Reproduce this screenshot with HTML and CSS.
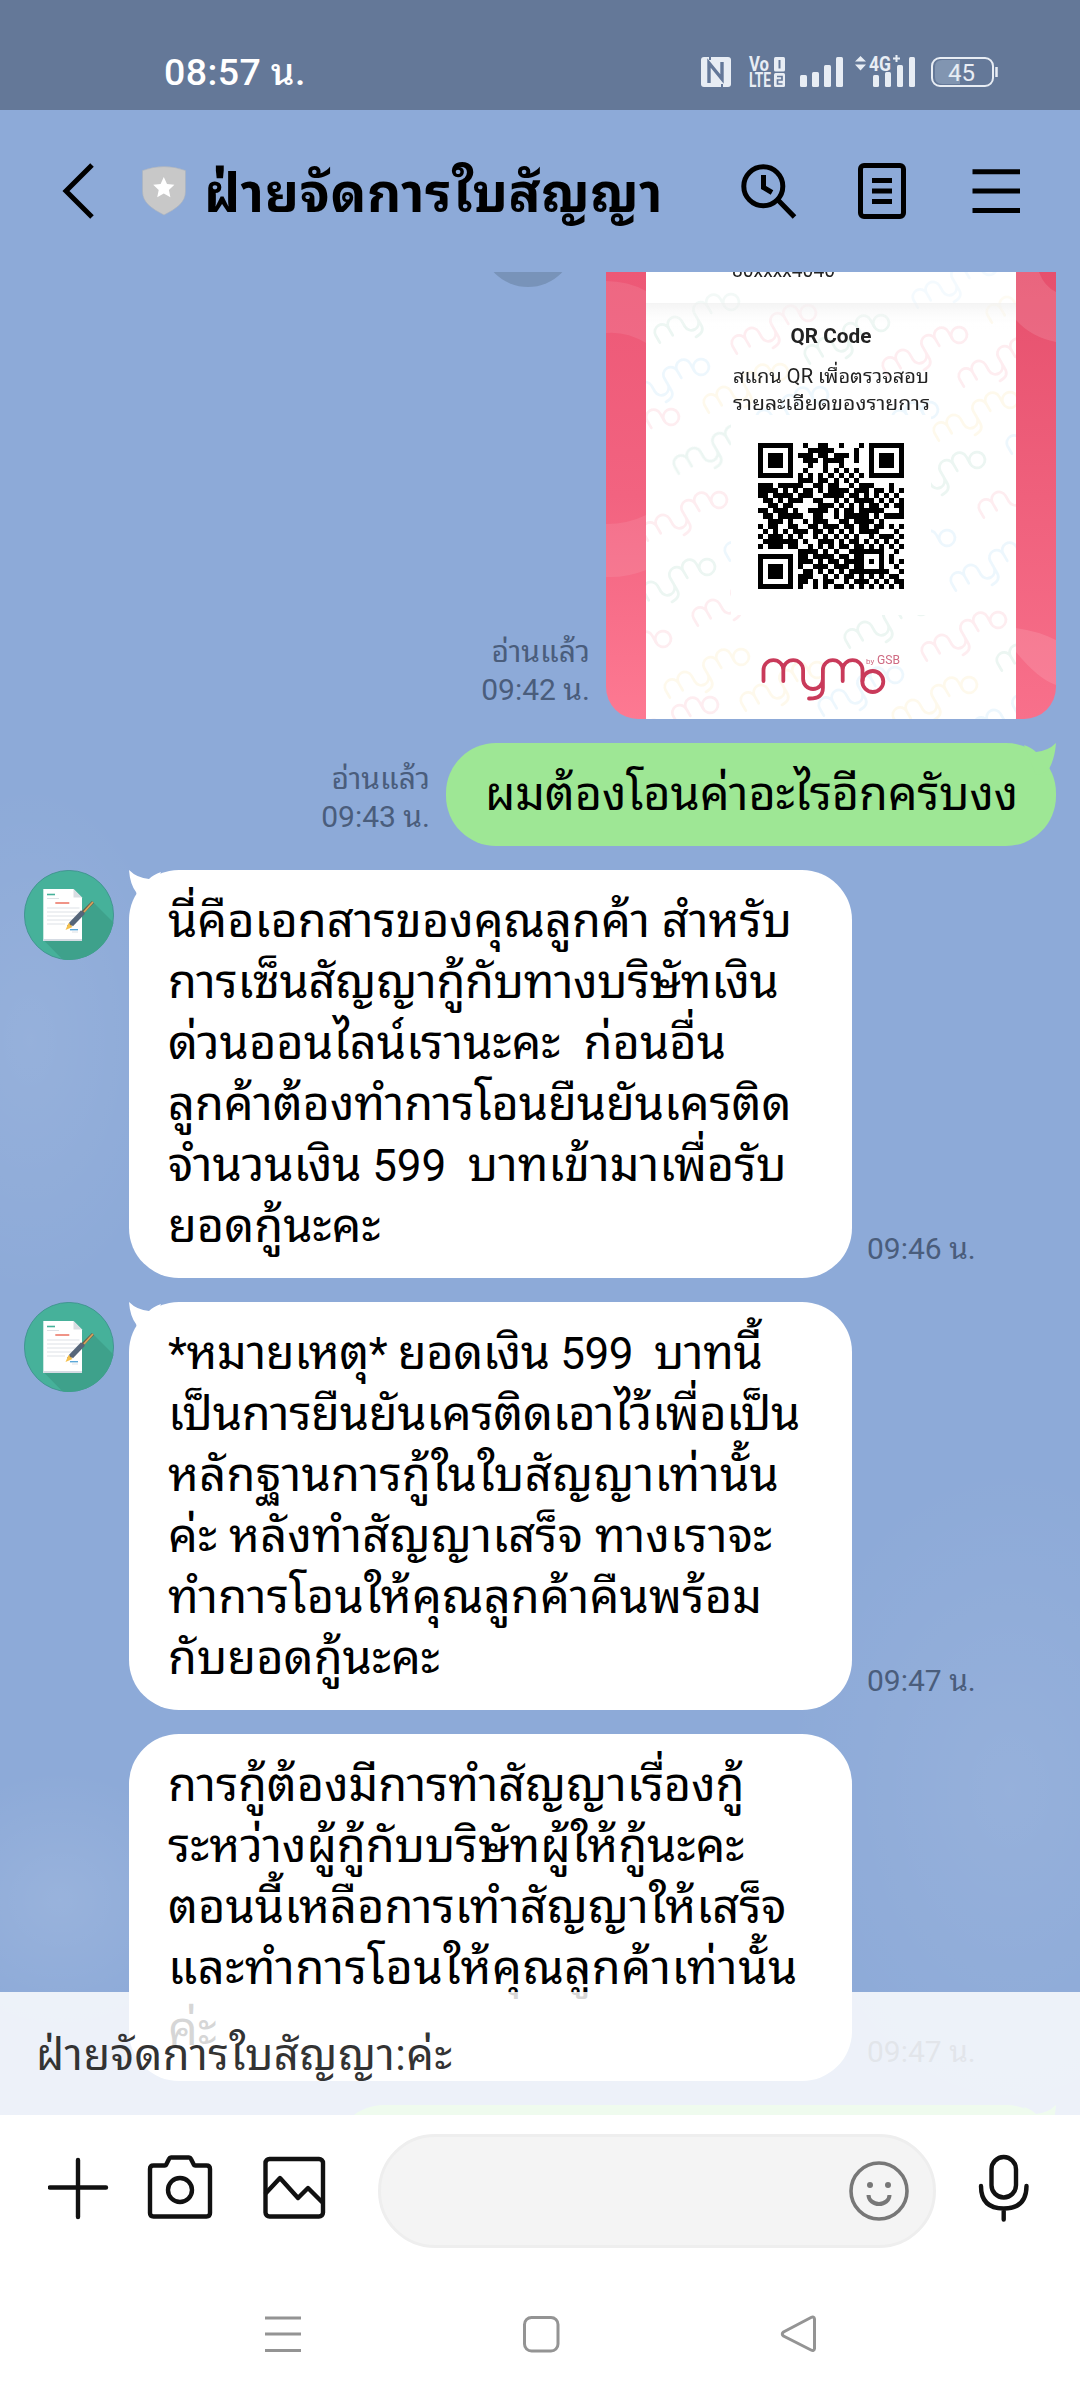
FILE: index.html
```html
<!DOCTYPE html>
<html lang="th">
<head>
<meta charset="utf-8">
<title>ฝ่ายจัดการใบสัญญา</title>
<link rel="stylesheet" href="styles.css">
</head>
<body>
<div class="phone">
  <div class="status">
    <span class="clock">08:57 น.</span>
    <svg class="status-icons" width="300" height="36" viewBox="700 54 300 36">
      <g fill="#e8edf4">
        <rect x="701" y="57" width="30" height="30" rx="3"/>
        <path d="M709 83V63L722 79V62" fill="none" stroke="#647899" stroke-width="3.4"/>
        <path d="M710 57v3M722 84v3" stroke="#647899" stroke-width="2"/>
        <text x="749" y="71" class="volte" textLength="20" lengthAdjust="spacingAndGlyphs">Vo</text>
        <text x="749" y="87" class="volte" textLength="22" lengthAdjust="spacingAndGlyphs">LTE</text>
        <rect x="774" y="57" width="11" height="14.500" rx="1.500"/>
        <rect x="774" y="73" width="11" height="14" rx="1.500"/>
        <path d="M779.500 60v8.500" stroke="#647899" stroke-width="2"/>
        <path d="M777 76.500h5v3.500h-4.500v4h5" fill="none" stroke="#647899" stroke-width="1.700"/>
        <rect x="800" y="75" width="7" height="12" rx="1.500"/><rect x="812" y="72" width="7" height="15" rx="1.500"/><rect x="824" y="65" width="7" height="22" rx="1.500"/><rect x="836" y="57" width="7" height="30" rx="1.500"/>
        <rect x="873" y="75" width="6" height="12" rx="1.500"/><rect x="885" y="72" width="6" height="15" rx="1.500"/><rect x="897" y="65" width="6" height="22" rx="1.500"/><rect x="909" y="57" width="6" height="30" rx="1.500"/>
        <path d="M855 61.500l5.500-5.500 5.500 5.500zM855 64.500h11l-5.500 6z"/>
        <text x="869" y="70.500" class="net" textLength="22" lengthAdjust="spacingAndGlyphs">4G</text>
        <path d="M893 58.500h7M896.500 55v7" stroke="#e8edf4" stroke-width="2"/>
        <path d="M942 60h18v24h-18q-7 0-7-7v-10q0-7 7-7z" fill="#8195b1"/>
        <rect x="932" y="58" width="61" height="28" rx="8" fill="none" stroke="#e8edf4" stroke-width="2"/>
        <path d="M996.500 67v10" stroke="#e8edf4" stroke-width="2.500"/>
        <text x="948" y="81" class="batt" textLength="27" lengthAdjust="spacingAndGlyphs">45</text>
      </g>
    </svg>
  </div>

  <header class="header">
    <svg class="back" width="36" height="56" viewBox="60 163 36 56"><path d="M92 165L66 191L92 217"/></svg>
    <svg class="shield" width="44" height="50" viewBox="142 167 44 50"><path d="M142.500 171.500q21.500-8 43 0v21c0 11-9 17-21.500 23.500c-12.500-6.500-21.500-12.500-21.500-23.500z" fill="#c8c8c8" stroke="#a9b1bd" stroke-width=".6"/><path d="M163.800 178l3.200 7 7.400.8-5.500 5.100 1.500 7.400-6.600-3.700-6.600 3.700 1.500-7.400-5.500-5.100 7.400-.8z" fill="#fff"/></svg>
    <h1 class="title">ฝ่ายจัดการใบสัญญา</h1>
    <svg class="tools" width="282" height="60" viewBox="740 161 282 60">
      <circle cx="763.300" cy="186.300" r="19.500"/><path d="M763.500 175V187.500L772 192.500M778 200L794.500 217"/>
      <rect x="860.500" y="165.500" width="43" height="51" rx="3.500"/><path d="M872 180.500h20M872 191h20M872 201.500h20"/>
      <path d="M972.500 171.700h47.500M972.500 191h47.500M972.500 210.600h47.500"/>
    </svg>
  </header>

  <main class="chat">
    <div class="row mine row-slip">
      <div class="share"></div>
      <div class="meta">อ่านแล้ว<br>09:42 น.</div>
      <svg class="slip" width="450" height="447" viewBox="0 0 450 447">
        <defs>
          <linearGradient id="pink" x1="0" y1="0" x2="0" y2="1"><stop offset="0" stop-color="#ed5876"/><stop offset=".5" stop-color="#f26380"/><stop offset="1" stop-color="#fd7992"/></linearGradient>
          <linearGradient id="pinkRight" x1="0" y1="0" x2="0" y2="1"><stop offset="0" stop-color="#e6506d"/><stop offset="1" stop-color="#f8708b"/></linearGradient>
          <linearGradient id="fade" x1="0" y1="0" x2="0" y2="1"><stop offset="0" stop-color="#f1f1f1"/><stop offset="1" stop-color="#fff" stop-opacity="0"/></linearGradient>
          <clipPath id="paper"><rect x="40" y="0" width="370" height="447"/></clipPath>
          <g id="mymo" fill="none" stroke-linecap="round"><path d="M0 21V10a9.900 9.900 0 0 1 19.800 0V21M19.800 10a9.900 9.900 0 0 1 19.800 0V19a9.900 10 0 0 0 19.800 0V10a9.900 9.900 0 0 1 19.800 0V21M79.200 10a9.900 9.900 0 0 1 19.800 0V21M59.400 10V28Q59.400 39 45.500 38.500"/><circle cx="109.300" cy="21.500" r="10.500"/></g>
        </defs>
        <rect width="42" height="447" fill="url(#pink)"/>
        <path d="M0 9q22 0 40 10V71Q20 59 0 61zM0 252Q22 252 40 243V298Q20 306 0 305z" fill="#fff" opacity=".09"/>
        <rect x="408" width="42" height="447" fill="url(#pinkRight)"/>
        <path d="M410 0h23q5 14 17 20v50q-25-5-40-22zM410 356q22 3 40 12v45q-18-6-40-33z" fill="#fff" opacity=".12"/>
        <g clip-path="url(#paper)">
          <rect x="40" width="370" height="447" fill="#fff"/>
          <g stroke-width="3.600" opacity=".085">
            <g stroke="#188c68"><use href="#mymo" transform="translate(46 57) rotate(-30) scale(.75)"/><use href="#mymo" transform="translate(196 78) rotate(-30) scale(.75)"/><use href="#mymo" transform="translate(65 188) rotate(-30) scale(.75)"/><use href="#mymo" transform="translate(22 322) rotate(-30) scale(.75)"/><use href="#mymo" transform="translate(292 215) rotate(-30) scale(.75)"/><use href="#mymo" transform="translate(236 362) rotate(-30) scale(.75)"/><use href="#mymo" transform="translate(388 385) rotate(-30) scale(.75)"/></g>
            <g stroke="#ea2850"><use href="#mymo" transform="translate(123 68) rotate(-30) scale(.75)"/><use href="#mymo" transform="translate(274 90) rotate(-30) scale(.75)"/><use href="#mymo" transform="translate(350 101) rotate(-30) scale(.75)"/><use href="#mymo" transform="translate(34 255) rotate(-30) scale(.75)"/><use href="#mymo" transform="translate(84 340) rotate(-30) scale(.75)"/><use href="#mymo" transform="translate(370 232) rotate(-30) scale(.75)"/><use href="#mymo" transform="translate(313 375) rotate(-30) scale(.75)"/><use href="#mymo" transform="translate(-14 172) rotate(-30) scale(.75)"/><use href="#mymo" transform="translate(-22 394) rotate(-30) scale(.75)"/><use href="#mymo" transform="translate(25 460) rotate(-30) scale(.75)"/></g>
            <g stroke="#2c9ee8"><use href="#mymo" transform="translate(16 122) rotate(-30) scale(.75)"/><use href="#mymo" transform="translate(135 150) rotate(-30) scale(.75)"/><use href="#mymo" transform="translate(245 165) rotate(-30) scale(.75)"/><use href="#mymo" transform="translate(304 22) rotate(-30) scale(.75)"/><use href="#mymo" transform="translate(342 305) rotate(-30) scale(.75)"/><use href="#mymo" transform="translate(398 168) rotate(-30) scale(.75)"/><use href="#mymo" transform="translate(116 275) rotate(-30) scale(.75)"/><use href="#mymo" transform="translate(262 293) rotate(-30) scale(.75)"/><use href="#mymo" transform="translate(210 430) rotate(-30) scale(.75)"/><use href="#mymo" transform="translate(365 450) rotate(-30) scale(.75)"/></g>
            <g stroke="#f1ba20"><use href="#mymo" transform="translate(325 155) rotate(-30) scale(.75)"/><use href="#mymo" transform="translate(378 37) rotate(-30) scale(.75)"/><use href="#mymo" transform="translate(56 412) rotate(-30) scale(.75)"/><use href="#mymo" transform="translate(132 425) rotate(-30) scale(.75)"/><use href="#mymo" transform="translate(284 440) rotate(-30) scale(.75)"/><use href="#mymo" transform="translate(95 127) rotate(-30) scale(.75)"/></g>
          </g>
          <rect x="40" y="0" width="370" height="31" fill="#fff" opacity=".4"/>
          <rect x="40" y="31" width="370" height="26" fill="url(#fade)" opacity=".8"/>
          <rect x="125" y="143" width="200" height="200" fill="#fff"/>
        </g>
        <text x="126" y="5" class="slip-text" textLength="103" lengthAdjust="spacingAndGlyphs">80xxxx4040</text>
        <text x="184.500" y="70.500" class="slip-bold" textLength="81" lengthAdjust="spacingAndGlyphs">QR Code</text>
        <text x="127" y="110.500" class="slip-text" textLength="196" lengthAdjust="spacingAndGlyphs">สแกน QR เพื่อตรวจสอบ</text>
        <text x="127" y="138" class="slip-text" textLength="197" lengthAdjust="spacingAndGlyphs">รายละเอียดของรายการ</text>
        <path id="qr" transform="translate(152 171) scale(5.034)" shape-rendering="crispEdges"/>
        <use href="#mymo" x="157.500" y="388" stroke="#c93a5a" stroke-width="3.800"/>
        <text x="260" y="392" class="by">by</text>
        <text x="271" y="392" class="gsb" textLength="23" lengthAdjust="spacingAndGlyphs">GSB</text>
      </svg>
    </div>

    <div class="row mine">
      <div class="meta">อ่านแล้ว<br>09:43 น.</div>
      <div class="bubble green"><svg class="tail tail-right" width="32" height="32" viewBox="0 0 32 32"><path d="M0 2Q8 5 12 9Q24 8 32 0Q31 14 26 24Q24 30 12 32z"/></svg>ผมต้องโอนค่าอะไรอีกครับงง</div>
    </div>

    <div class="row theirs">
      <svg class="avatar" width="90" height="90" viewBox="0 0 90 90"><use href="#doc-avatar"/></svg>
      <div class="bubble white"><svg class="tail tail-left" width="32" height="32" viewBox="0 0 32 32"><path d="M32 2Q24 5 20 9Q8 8 0 0Q1 14 7 22Q8 30 20 32z"/></svg>
        <div>นี่คือเอกสารของคุณลูกค้า สำหรับ</div>
        <div class="tight">การเซ็นสัญญากู้กับทางบริษัทเงิน</div>
        <div>ด่วนออนไลน์เรานะคะ&nbsp; ก่อนอื่น</div>
        <div class="snug">ลูกค้าต้องทำการโอนยืนยันเครติด</div>
        <div class="snug">จำนวนเงิน<span class="num"> 599&nbsp; </span>บาทเข้ามาเพื่อรับ</div>
        <div>ยอดกู้นะคะ</div>
      </div>
      <div class="meta">09:46 น.</div>
    </div>

    <div class="row theirs">
      <svg class="avatar" width="90" height="90" viewBox="0 0 90 90"><use href="#doc-avatar"/></svg>
      <div class="bubble white"><svg class="tail tail-left" width="32" height="32" viewBox="0 0 32 32"><path d="M32 2Q24 5 20 9Q8 8 0 0Q1 14 7 22Q8 30 20 32z"/></svg>
        <div class="tightest"><span class="num">*</span>หมายเหตุ<span class="num">* </span>ยอดเงิน<span class="num"> 599&nbsp; </span>บาทนี้</div>
        <div class="tight">เป็นการยืนยันเครติดเอาไว้เพื่อเป็น</div>
        <div class="loose">หลักฐานการกู้ในใบสัญญาเท่านั้น</div>
        <div class="loose">ค่ะ หลังทำสัญญาเสร็จ ทางเราจะ</div>
        <div class="loose">ทำการโอนให้คุณลูกค้าคืนพร้อม</div>
        <div>กับยอดกู้นะคะ</div>
      </div>
      <div class="meta">09:47 น.</div>
    </div>

    <div class="row theirs">
      <div class="avatar"></div>
      <div class="bubble white">
        <div class="snug">การกู้ต้องมีการทำสัญญาเรื่องกู้</div>
        <div>ระหว่างผู้กู้กับบริษัทผู้ให้กู้นะคะ</div>
        <div>ตอนนี้เหลือการเทำสัญญาให้เสร็จ</div>
        <div class="wide">และทำการโอนให้คุณลูกค้าเท่านั้น</div>
        <div>ค่ะ</div>
      </div>
      <div class="meta">09:47 น.</div>
    </div>

    <div class="row mine">
      <div class="bubble green next"><svg class="tail tail-right" width="32" height="32" viewBox="0 0 32 32"><path d="M0 2Q8 5 12 9Q24 8 32 0Q31 14 26 24Q24 30 12 32z"/></svg></div>
    </div>

    <div class="notice">ฝ่ายจัดการใบสัญญา:ค่ะ</div>
  </main>

  <div class="composer">
    <svg class="actions" width="280" height="70" viewBox="48 2152 280 70">
      <path d="M50 2187.500h56M78 2160v57"/>
      <path d="M153.500 2165.500h11q1.500 0 2-1.500l2.500-5q.7-1.500 2-1.500h18q1.300 0 2 1.500l2.500 5q.5 1.500 2 1.500h11q3.500 0 3.500 3.500v44q0 3.500-3.500 3.500h-53q-3.500 0-3.500-3.500v-44q0-3.500 3.500-3.500z"/><circle cx="180" cy="2190" r="12"/>
      <rect x="265.500" y="2159" width="57.500" height="57.500" rx="4"/><path d="M266 2193L280 2178L298 2198L308 2188L322 2202"/>
    </svg>
    <div class="input">
      <svg width="62" height="62" viewBox="0 0 62 62"><circle cx="31" cy="31" r="28" fill="none" stroke="#777" stroke-width="3.600"/><circle cx="22" cy="25" r="3" fill="#777"/><circle cx="40" cy="25" r="3" fill="#777"/><path d="M20.500 35a10.500 9 0 0 0 21 0" fill="none" stroke="#777" stroke-width="4"/></svg>
    </div>
    <svg class="mic" width="52" height="70" viewBox="978 2153 52 70"><rect x="991.500" y="2157" width="24.500" height="40.500" rx="12.250"/><path d="M981 2186q0 22.500 22.700 22.500t22.800-22.500M1003.700 2208.500v11"/></svg>
  </div>

  <nav class="nav">
    <svg width="554" height="40" viewBox="264 2314 554 40">
      <path d="M265 2318h36M265 2334h36M265 2350.500h36"/>
      <rect x="524.500" y="2317.500" width="33.500" height="33.500" rx="7"/>
      <path d="M814.500 2319v29.500q-.5 3-3.500 1.500L783.500 2336q-2.500-2 0-4L811 2317.500q3-1.500 3.500 1.500z"/>
    </svg>
  </nav>
</div>

<svg width="0" height="0" class="defs">
  <defs>
    <g id="doc-avatar">
      <clipPath id="disc"><circle cx="45" cy="45" r="45"/></clipPath>
      <circle cx="45" cy="45" r="44.600" fill="#46b19a" stroke="#3b8f8a" stroke-width=".8"/>
      <path d="M69 32L90 53V90H39L19.500 70z" fill="#3ea18b" clip-path="url(#disc)"/>
      <path d="M19.300 19H49.500L58 27.500V71H19.300z" fill="#fff"/><path d="M49.500 19L58 27.500H49.500z" fill="#d9dde2"/>
      <path d="M19.300 70h38.700" stroke="#d5dbe3" stroke-width="2"/>
      <path d="M23 24.500h8" stroke="#46b19a" stroke-width="1.600"/><path d="M31.300 33h14" stroke="#f09487" stroke-width="2"/>
      <path d="M23 28.500h12M23 38h32.500M23 42h32.500M23 46h32.500M23 50h26M23 54h18M48 62h6" stroke="#dde1e6" stroke-width="1"/>
      <path d="M46 59.700h8" stroke="#5aa7d8" stroke-width="1.400"/>
      <path d="M69 32L44 57" stroke="#6b5b4a" stroke-width="3"/><path d="M69 32L60 42" stroke="#d8a45c" stroke-width="1.800"/><path d="M59 42L47 54.500" stroke="#56667a" stroke-width="5.400"/><path d="M44.500 53l4 4-7 3z" fill="#f5c04c"/>
    </g>
  </defs>
</svg>
<script src="qr.js"></script>
</body>
</html>
```
FILE: styles.css
```css
* { box-sizing: border-box; }
body {
  margin: 0;
  font-family: Roboto, "Noto Sans Thai Looped", "Noto Sans Thai", sans-serif;
  color: #000;
}
svg { display: block; flex: none; }
.defs { position: absolute; }
.phone {
  width: 1080px;
  height: 2400px;
  display: flex;
  flex-direction: column;
  overflow: hidden;
  background:
    radial-gradient(ellipse 150px 260px at 30px 1040px, rgba(255,255,255,.08), transparent),
    radial-gradient(ellipse 230px 330px at 1010px 1790px, rgba(255,255,255,.08), transparent),
    radial-gradient(ellipse 140px 130px at 60px 1900px, rgba(255,255,255,.1), transparent),
    #8daad8;
}
.status {
  height: 110px;
  flex: none;
  display: flex;
  justify-content: space-between;
  padding: 53px 80px 0 164px;
  background: #647898;
}
.status-icons { margin-top: 1px; overflow: visible; }
.clock { color: #fff; font-size: 37.5px; line-height: 38px; font-weight: 500; letter-spacing: .4px; white-space: nowrap; }
.volte { font: 700 19.5px Roboto, sans-serif; }
.net { font: 700 21px Roboto, sans-serif; }
.batt { font: 400 24px Roboto, sans-serif; }

.header {
  height: 162px;
  flex: none;
  display: flex;
  align-items: center;
  padding: 0 58px 0 60px;
}
.back path, .tools * { fill: none; stroke: #000; stroke-width: 5; }
.shield { margin-left: 46px; }
.title { margin: 0 auto 0 18px; padding-top: 5px; font-size: 53px; line-height: 70px; font-weight: 700; letter-spacing: .6px; white-space: nowrap; }

.chat {
  position: relative;
  height: 1843px;
  flex: none;
  overflow: hidden;
  display: flex;
  flex-direction: column;
  gap: 24px;
}
.row { display: flex; flex: none; align-items: flex-end; padding: 0 24px; }
.mine { justify-content: flex-end; }
.row-slip { position: relative; }
.share {
  position: absolute;
  left: 481px;
  top: -79px;
  width: 94px;
  height: 94px;
  border-radius: 50%;
  background: #7893b9;
}
.slip { border-radius: 0 0 32px 32px; }
.slip-text { font-size: 20px; fill: #222; }
.slip-bold { font-size: 20px; font-weight: 700; fill: #222; }
.by { font-size: 8px; fill: #cf6a82; }
.gsb { font-size: 12px; fill: #cf6a82; }

.meta {
  font-size: 30px;
  line-height: 38px;
  color: #4a5d7c;
  white-space: nowrap;
  padding: 0 0 10px 15px;
}
.mine .meta { text-align: right; padding: 0 16px 10px 0; }

.bubble {
  position: relative;
  border-radius: 50px;
  padding: 20px 39px 22px;
  font-size: 47px;
  line-height: 61px;
  white-space: nowrap;
}
.green { width: 610px; height: 103px; background: #9ee795; letter-spacing: -.2px; }
.green.next { width: 722px; }
.white { width: 723px; background: #fff; }
.num { font-size: 44px; line-height: 1; }
.tight { letter-spacing: -.3px; }
.tightest { letter-spacing: -.45px; }
.snug { letter-spacing: -.1px; }
.loose { letter-spacing: .2px; }
.wide { letter-spacing: .55px; }
.tail { position: absolute; top: 0; }
.tail-left { left: 0; fill: #fff; }
.tail-right { right: 0; fill: #9ee795; }
.avatar { width: 90px; margin-right: 15px; align-self: flex-start; }

.notice {
  position: absolute;
  left: 0;
  right: 0;
  bottom: 0;
  height: 123px;
  padding: 31px 36px;
  font-size: 43.5px;
  letter-spacing: .5px;
  line-height: 66px;
  color: #333;
  background: rgba(255,255,255,.84);
}
.composer {
  height: 153px;
  flex: none;
  display: flex;
  align-items: flex-start;
  padding: 19px 50px 0 48px;
  background: #fff;
}
.actions, .mic { margin-top: 18px; }
.actions *, .mic * { fill: none; stroke: #111; stroke-width: 4.4; stroke-linecap: round; stroke-linejoin: round; }
.mic { margin: 19px 0 0 42px; }
.input {
  width: 558px;
  height: 114px;
  margin-left: 50px;
  border: 3px solid #eee;
  border-radius: 57px;
  background: #f4f4f4;
  display: flex;
  align-items: center;
  justify-content: flex-end;
  padding-right: 23px;
}
.nav {
  flex: 1;
  display: flex;
  justify-content: center;
  padding: 46px 0 0 2px;
  background: #fff;
}
.nav * { fill: none; stroke: #949494; stroke-width: 3; }
```
FILE: qr.js
```javascript
const rows = [
  "11111110010011001000101111111",
  "10000010001111100001001000001",
  "10111010111011011101001011101",
  "10111010011101111001001011101",
  "10111010001001001000001011101",
  "10000010010001010101001000001",
  "11111110101010101010101111111",
  "00000000111011010101000000000",
  "11101111100110110010111000100",
  "11110101011010111101110110101",
  "11011110111001111011010101010",
  "01101011100110010101111010101",
  "00110110000011101010101101011",
  "11011101001111010110111110001",
  "01101111100110010111110101111",
  "00111010010111001101111010000",
  "10110011001101110110110110101",
  "01010101110110101010111100010",
  "10111010100101010101001011101",
  "01111111010011101011010101010",
  "10111011001010101101101010101",
  "00000000111101010011111110010",
  "11111110110111101101100010100",
  "10000010111010110111101010101",
  "10111010100111011101100010010",
  "10111010011010101011111111001",
  "10111010111001010110101010110",
  "10000010110101100101110101011",
  "11111110100101011010101010101"
];
const cells = rows.flatMap((row, y) =>
  [...row].map((bit, x) => (bit === "1" ? `M${x} ${y}h1v1h-1z` : "")));
document.getElementById("qr").setAttribute("d", cells.join(""));
```
